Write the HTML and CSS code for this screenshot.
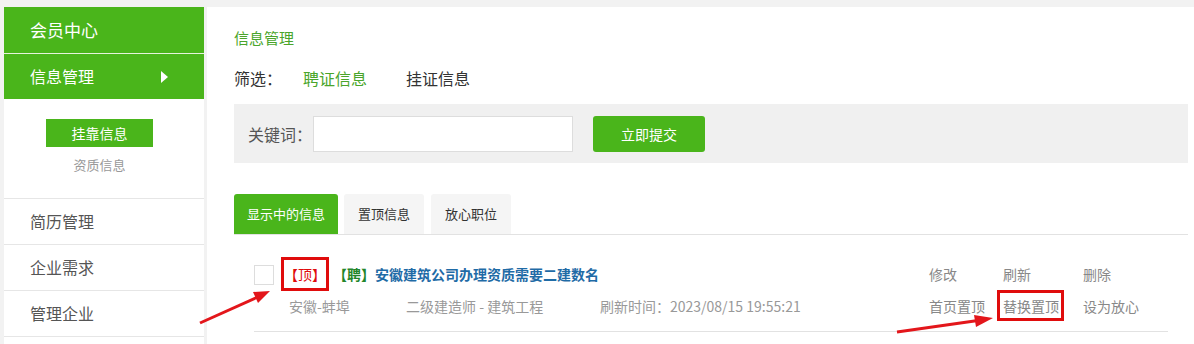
FILE: index.html
```html
<!DOCTYPE html>
<html lang="zh-CN">
<head>
  <meta charset="UTF-8" />
  <title>会员中心 - 信息管理</title>
  <link rel="stylesheet" href="styles.css">
</head>
<body>
  <div class="page">
    <aside class="side">
      <div class="side-head">会员中心</div>
      <div class="side-cur">信息管理<span class="tri"></span></div>
      <div class="side-sub">
        <a class="sub-on">挂靠信息</a>
        <a class="sub-item">资质信息</a>
      </div>
      <div class="side-row">简历管理</div>
      <div class="side-row">企业需求</div>
      <div class="side-row">管理企业</div>
    </aside>

    <main class="main">
      <div class="crumb">信息管理</div>
      <div class="filter">
        <span class="filter-label">筛选：</span>
        <a class="filter-on">聘证信息</a>
        <a class="filter-item">挂证信息</a>
      </div>
      <div class="search">
        <label class="search-label">关键词：</label>
        <input type="text" class="search-input" />
        <button class="search-btn">立即提交</button>
      </div>
      <div class="tabs">
        <a class="tab tab-on">显示中的信息</a>
        <a class="tab">置顶信息</a>
        <a class="tab">放心职位</a>
      </div>

      <div class="item">
        <div class="check"><span class="box"></span></div>
        <div class="info">
          <div class="line1">
            <span class="top-tag">【顶】</span>
            <a class="title"><span class="pin">【聘】</span>安徽建筑公司办理资质需要二建数名</a>
          </div>
          <div class="line2">
            <span class="loc">安徽-蚌埠</span>
            <span class="cert">二级建造师 - 建筑工程</span>
            <span class="time">刷新时间：2023/08/15 19:55:21</span>
          </div>
        </div>
        <div class="ops">
          <div class="ops-row">
            <a class="op op-a">修改</a>
            <a class="op op-b">刷新</a>
            <a class="op">删除</a>
          </div>
          <div class="ops-row ops-row2">
            <a class="op op-a">首页置顶</a>
            <a class="op op-b mark">替换置顶</a>
            <a class="op">设为放心</a>
          </div>
        </div>
      </div>
    </main>
  </div>

  <svg class="arrows" width="1194" height="344" viewBox="0 0 1194 344">
    <line x1="200" y1="323" x2="260" y2="296" stroke="#e3161b" stroke-width="3" />
    <polygon points="270,291 258,303 253,292" fill="#e3161b" />
    <line x1="897" y1="332" x2="978" y2="320.5" stroke="#e3161b" stroke-width="3" />
    <polygon points="993,318 976,327 974,315" fill="#e3161b" />
  </svg>
</body>
</html>
```

FILE: styles.css
```css
* {
  box-sizing: border-box;
  margin: 0;
  padding: 0;
}

body {
  background: #f2f2f2;
  font-family: "Noto Sans CJK SC", "Liberation Sans", sans-serif;
  color: #333;
  height: 344px;
  overflow: hidden;
}

a {
  text-decoration: none;
}

.page {
  display: flex;
  gap: 3px;
  padding: 7px 0 0 4px;
  height: 100%;
}

/* sidebar */
.side {
  width: 200px;
  flex-shrink: 0;
  background: #fff;
}

.side-head {
  height: 47px;
  line-height: 46px;
  background: #4ab51b;
  color: #fff;
  font-size: 17px;
  padding-left: 26px;
  border-bottom: 1px solid #e6f3de;
}

.side-cur {
  height: 45px;
  line-height: 45px;
  background: #4ab51b;
  color: #fff;
  font-size: 16px;
  padding-left: 26px;
  display: flex;
  align-items: center;
}

.tri {
  margin-left: 67px;
  width: 0;
  height: 0;
  border-left: 7px solid #fff;
  border-top: 6px solid transparent;
  border-bottom: 6px solid transparent;
}

.side-sub {
  height: 100px;
  padding-top: 20px;
  display: flex;
  flex-direction: column;
  align-items: center;
  border-bottom: 1px solid #e6e6e6;
  padding-right: 9px;
}

.sub-on {
  width: 107px;
  height: 28px;
  line-height: 28px;
  text-align: center;
  background: #4ab51b;
  color: #fff;
  font-size: 14px;
}

.sub-item {
  margin-top: 4px;
  font-size: 13px;
  color: #999;
  line-height: 28px;
}

.side-row {
  height: 46px;
  line-height: 45px;
  padding-left: 26px;
  font-size: 16px;
  color: #555;
  border-bottom: 1px solid #e6e6e6;
}

/* main */
.main {
  flex: 1;
  background: #fff;
  padding: 21px 6px 0 27px;
}

.crumb {
  font-size: 15px;
  line-height: 20px;
  color: #4aa52b;
}

.filter {
  margin-top: 20px;
  font-size: 16px;
  line-height: 20px;
  display: flex;
}

.filter-label {
  width: 69px;
}

.filter-on {
  color: #4aa52b;
  width: 103px;
}

.filter-item {
  color: #333;
}

.search {
  margin-top: 16px;
  height: 59px;
  background: #f0f0f0;
  display: flex;
  align-items: center;
  padding-left: 14px;
}

.search-label {
  width: 65px;
  font-size: 16px;
  color: #555;
}

.search-input {
  width: 260px;
  height: 36px;
  border: 1px solid #ddd;
  background: #fff;
  outline: none;
}

.search-btn {
  margin-left: 20px;
  width: 112px;
  height: 36px;
  border: none;
  border-radius: 3px;
  background: #4ab51b;
  color: #fff;
  font-size: 14px;
  font-family: inherit;
}

.tabs {
  margin-top: 31px;
  height: 41px;
  display: flex;
  gap: 6px;
  border-bottom: 1px solid #e2e2e2;
}

.tab {
  width: 80px;
  height: 40px;
  line-height: 40px;
  text-align: center;
  background: #f5f5f5;
  color: #333;
  font-size: 13px;
  border-radius: 3px 3px 0 0;
}

.tab + .tab + .tab {
  margin-left: 1px;
}

.tab-on {
  width: 104px;
  background: #4ab51b;
  color: #fff;
}

/* list item */
.item {
  margin-left: 20px;
  width: 914px;
  display: flex;
  padding-top: 22px;
  padding-bottom: 10px;
  border-bottom: 1px solid #e2e2e2;
}

.check {
  width: 27px;
  padding-top: 8px;
}

.box {
  display: block;
  width: 20px;
  height: 20px;
  border: 1px solid #ddd;
}

.info {
  flex: 1;
}

.line1 {
  height: 34px;
  display: flex;
  align-items: center;
}

.top-tag {
  width: 48px;
  height: 34px;
  line-height: 28px;
  border: 3px solid #e00c0c;
  color: #e00c0c;
  font-size: 14px;
  text-align: center;
}

.title {
  margin-left: 4px;
  font-size: 14px;
  font-weight: bold;
  color: #1f6ba6;
}

.pin {
  color: #23862a;
}

.line2 {
  height: 30px;
  line-height: 30px;
  padding-left: 8px;
  font-size: 14px;
  color: #999;
  display: flex;
}

.loc {
  width: 117px;
}

.cert {
  width: 194px;
}

.ops {
  width: 239px;
}

.ops-row {
  height: 34px;
  line-height: 34px;
  display: flex;
}

.ops-row2 {
  height: 30px;
  line-height: 30px;
}

.op {
  font-size: 14px;
  color: #888;
}

.op-a {
  width: 74px;
}

.op-b {
  width: 80px;
}

.mark {
  position: relative;
}

.mark::after {
  content: "";
  position: absolute;
  left: -6px;
  top: -1px;
  width: 67px;
  height: 31px;
  border: 3px solid #e00c0c;
  box-sizing: border-box;
}

.arrows {
  position: absolute;
  left: 0;
  top: 0;
  pointer-events: none;
}
```
